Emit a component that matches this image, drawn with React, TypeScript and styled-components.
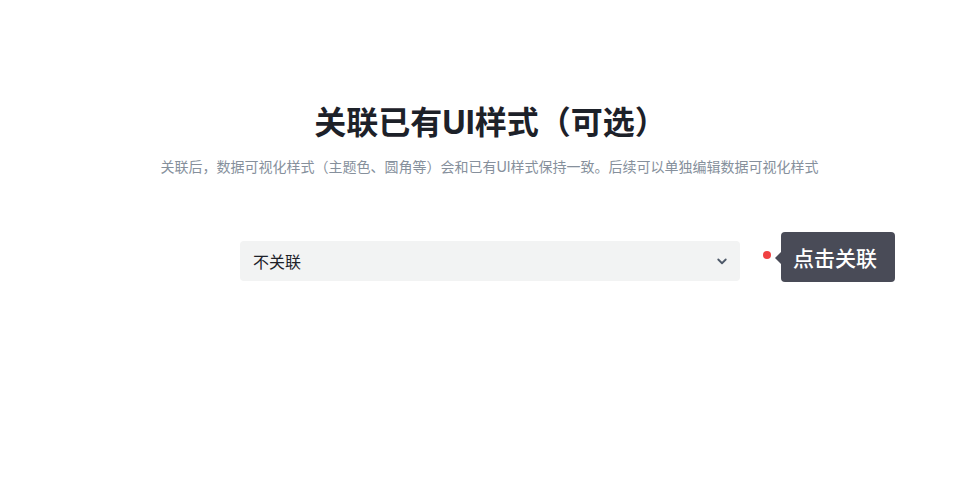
import React, { ReactElement } from 'react';
import styled, { createGlobalStyle } from 'styled-components';

const GlobalStyle = createGlobalStyle`
	html, body {
		margin: 0;
		padding: 0;
		background: #ffffff;
		font-family: Inter, "Noto Sans CJK SC", sans-serif;
	}
`;

const Page = styled.div`
	width: 974px;
	height: 494px;
	display: flex;
	flex-direction: column;
	align-items: center;
	padding-top: 102px;
	box-sizing: border-box;
`;

const Title = styled.h1`
	margin: 0;
	font-size: 32px;
	line-height: 42px;
	font-weight: 700;
	color: #1d2129;
	padding-left: 7px;
`;

const Subtitle = styled.p`
	margin: 12px 0 0;
	font-size: 14px;
	line-height: 22px;
	color: #86909c;
	padding-left: 5px;
`;

const Row = styled.div`
	margin-top: 63px;
	position: relative;
	padding-left: 6px;
`;

const Select = styled.div`
	width: 500px;
	height: 40px;
	box-sizing: border-box;
	padding: 0 9px 0 13px;
	display: flex;
	align-items: center;
	justify-content: space-between;
	background: #f2f3f3;
	border-radius: 4px;
	font-size: 16px;
	color: #1d2129;
	cursor: pointer;
`;

const Chevron = styled.svg`
	width: 18px;
	height: 18px;
	color: #4e5969;
`;

const Hint = styled.div`
	position: absolute;
	left: 529px;
	top: -9px;
	display: flex;
	align-items: center;
	white-space: nowrap;
`;

const Dot = styled.span`
	flex-shrink: 0;
	width: 8px;
	height: 8px;
	border-radius: 50%;
	background: #f04142;
	margin-right: 10px;
	margin-top: -5px;
`;

const Bubble = styled.div`
	position: relative;
	flex-shrink: 0;
	height: 50px;
	box-sizing: border-box;
	padding: 0 18px 0 12px;
	display: flex;
	align-items: center;
	background: #494b57;
	border-radius: 4px;
	color: #ffffff;
	font-size: 21px;
	font-weight: 500;

	&::before {
		content: '';
		position: absolute;
		left: -6px;
		top: 20px;
		border-top: 6px solid transparent;
		border-bottom: 6px solid transparent;
		border-right: 6px solid #494b57;
	}
`;

export default function App(): ReactElement {
	return (
		<>
			<GlobalStyle />
			<Page>
				<Title>关联已有UI样式（可选）</Title>
				<Subtitle>
					关联后，数据可视化样式（主题色、圆角等）会和已有UI样式保持一致。后续可以单独编辑数据可视化样式
				</Subtitle>
				<Row>
					<Select>
						<span>不关联</span>
						<Chevron viewBox="0 0 24 24" fill="none" stroke="currentColor" strokeWidth={2.4} strokeLinecap="round" strokeLinejoin="round">
							<path d="M7 10l5 5 5-5" />
						</Chevron>
					</Select>
					<Hint>
						<Dot />
						<Bubble>点击关联</Bubble>
					</Hint>
				</Row>
			</Page>
		</>
	);
}
